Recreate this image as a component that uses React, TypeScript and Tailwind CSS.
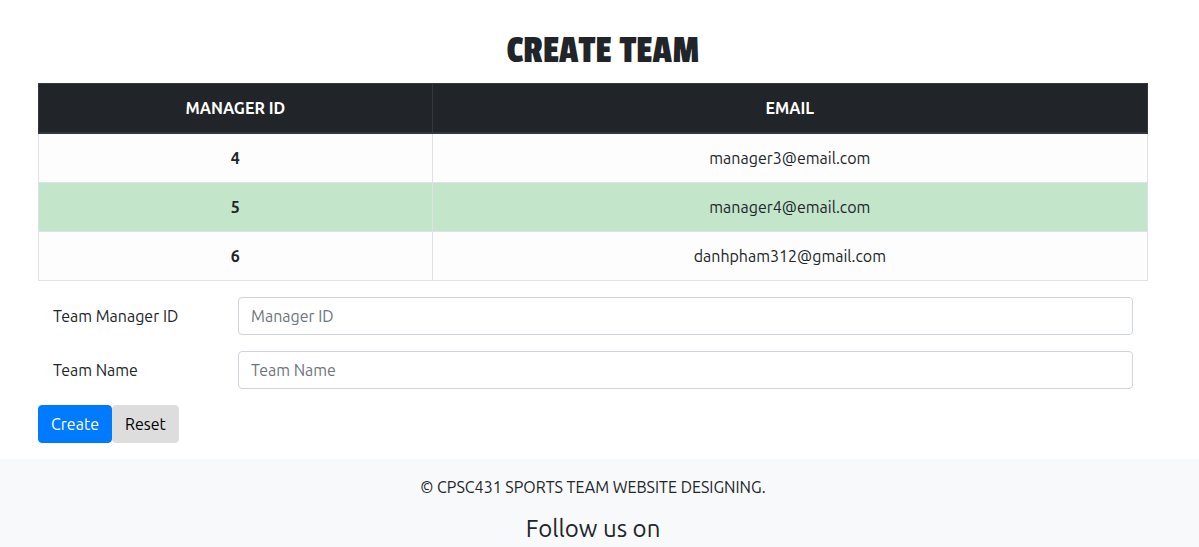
import React from "react";

const managers = [
  { id: 4, email: "manager3@email.com" },
  { id: 5, email: "manager4@email.com" },
  { id: 6, email: "danhpham312@gmail.com" },
];

const fields = [
  { id: "manager-id", label: "Team Manager ID", placeholder: "Manager ID" },
  { id: "team-name", label: "Team Name", placeholder: "Team Name" },
];

export default function App() {
  return (
    <div className="h-screen overflow-hidden bg-white font-['Ubuntu','Noto_Sans',sans-serif] text-base text-[#212529]">
      <main className="pr-[51px] pl-[38px] pt-[27px]">
        <h1 className="mb-2 pl-5 text-center font-['Passion_One','Open_Sans_Condensed',sans-serif] text-[40px] leading-[48px] font-normal">
          CREATE TEAM
        </h1>
        <table className="mb-4 w-full table-fixed border-collapse border border-[#dee2e6] text-center">
          <colgroup>
            <col className="w-[35.5%]" />
            <col />
          </colgroup>
          <thead className="bg-[#212529] text-white">
            <tr>
              <th scope="col" className="border border-b-2 border-[#32383e] p-3 font-bold">MANAGER ID</th>
              <th scope="col" className="border border-b-2 border-[#32383e] p-3 font-bold">EMAIL</th>
            </tr>
          </thead>
          <tbody>
            {managers.map((m) => (
              <tr key={m.id} className="bg-[#fdfdfd] even:bg-[#c3e6cb]">
                <th scope="row" className="border border-[#dee2e6] p-3 font-bold">{m.id}</th>
                <td className="border border-[#dee2e6] p-3">{m.email}</td>
              </tr>
            ))}
          </tbody>
        </table>
        <form>
          {fields.map((f) => (
            <div key={f.id} className="mb-4 flex items-center px-[15px]">
              <label htmlFor={f.id} className="w-[185px] shrink-0">{f.label}</label>
              <input
                id={f.id}
                type="text"
                placeholder={f.placeholder}
                className="h-[38px] min-w-0 flex-1 rounded border border-[#ced4da] bg-white px-3 placeholder:text-[#6c757d]"
              />
            </div>
          ))}
          <div className="mb-4 flex">
            <button type="submit" className="h-[38px] rounded border border-[#007bff] bg-[#007bff] px-3 text-white">Create</button>
            <button type="reset" className="h-[38px] rounded border border-[#dddddd] bg-[#dddddd] px-3 text-black">Reset</button>
          </div>
        </form>
      </main>
      <footer className="bg-[#f8f9fa] pt-4 pr-[13px] pb-8 text-center">
        <p className="mb-4">© CPSC431 SPORTS TEAM WEBSITE DESIGNING.</p>
        <h2 className="text-2xl leading-7">Follow us on</h2>
      </footer>
    </div>
  );
}
